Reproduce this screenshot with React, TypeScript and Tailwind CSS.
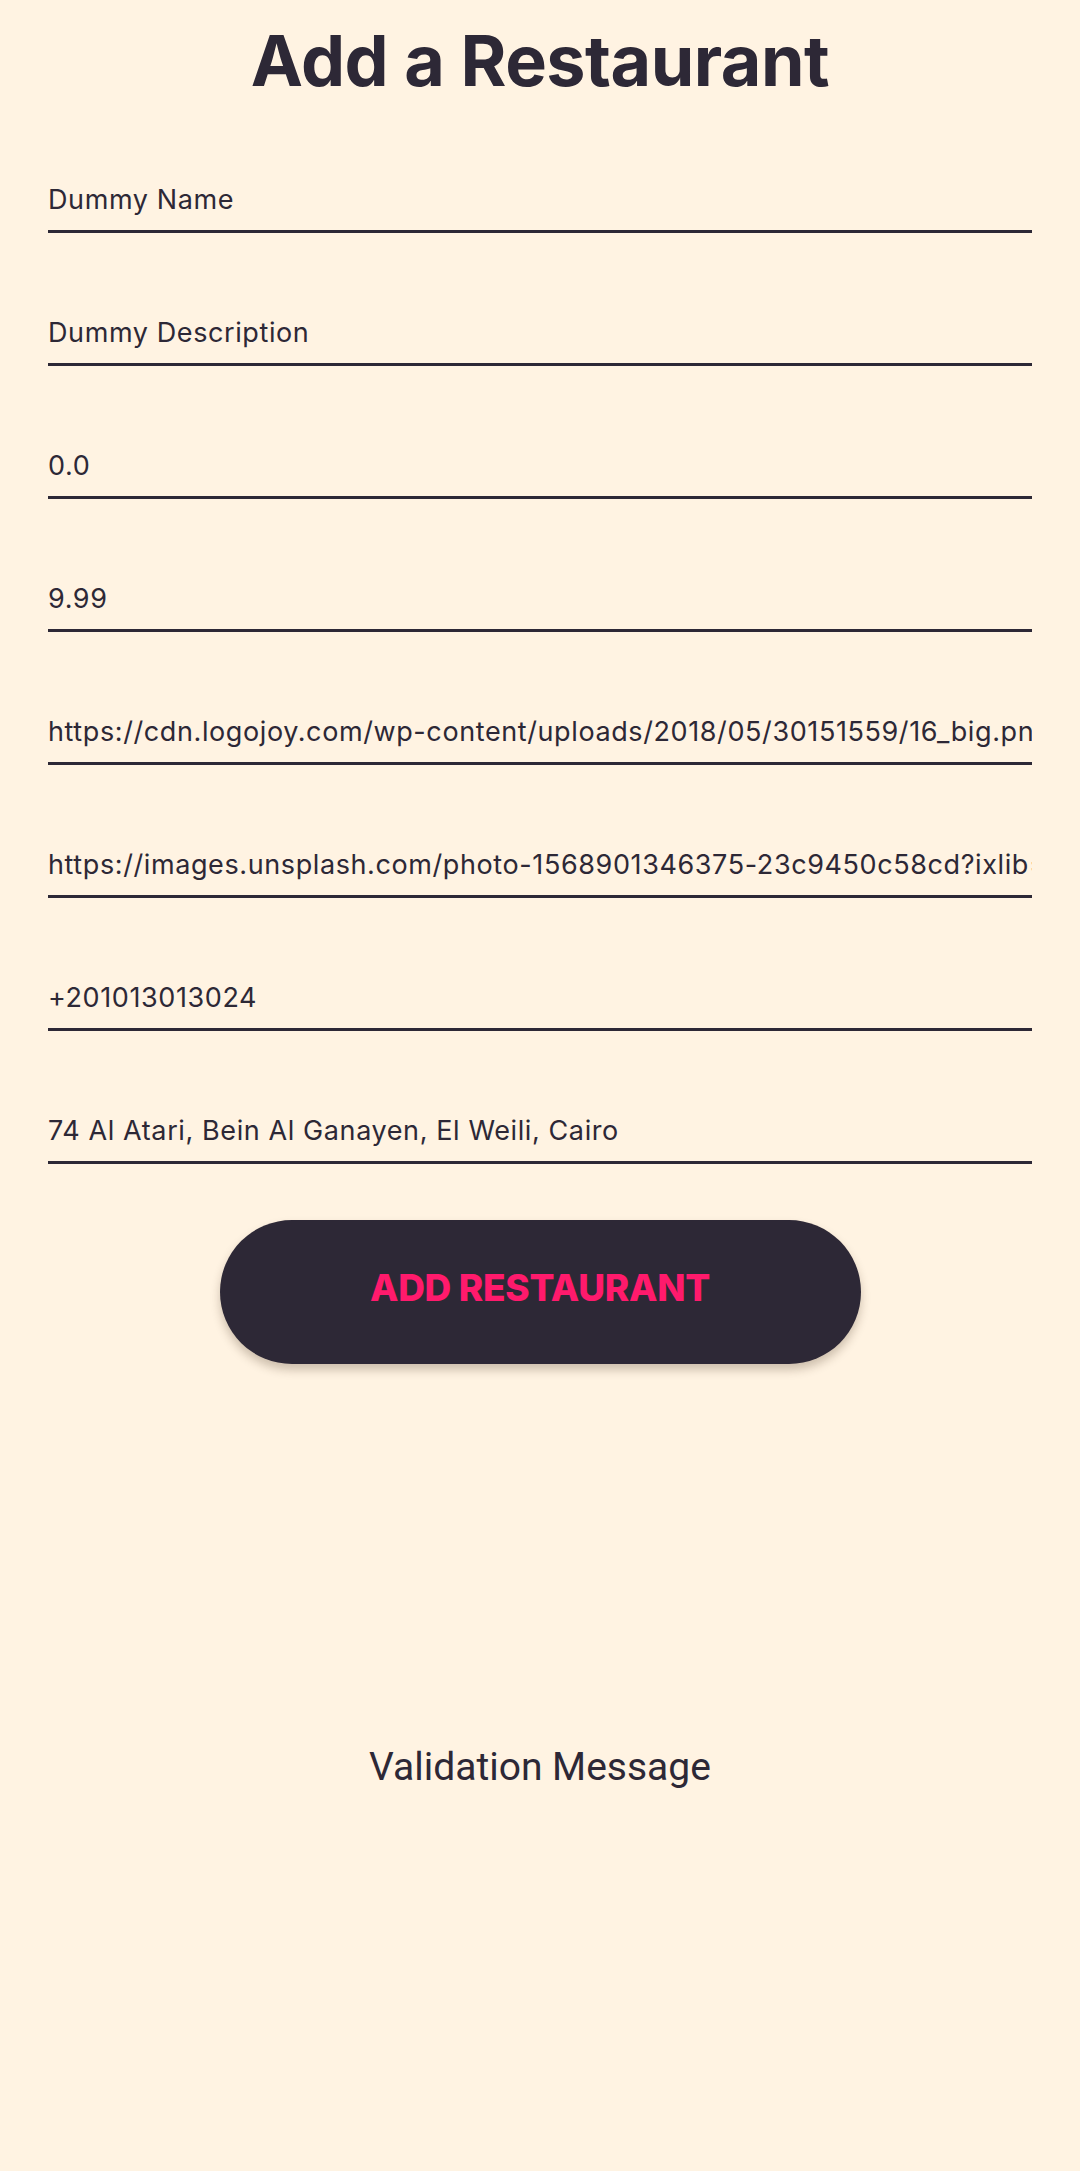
const fields = [
  'Dummy Name',
  'Dummy Description',
  '0.0',
  '9.99',
  'https://cdn.logojoy.com/wp-content/uploads/2018/05/30151559/16_big.png',
  'https://images.unsplash.com/photo-1568901346375-23c9450c58cd?ixlib=rb-1.2.1&auto=format&fit=crop&w=1000&q=80',
  '+201013013024',
  '74 Al Atari, Bein Al Ganayen, El Weili, Cairo',
];

export default function App() {
  return (
    <div className="min-h-[2171px] w-full bg-[#fff3e2] flex flex-col text-[#2d2836] font-['Inter',sans-serif]">
      <h1 className="text-center text-[70px] leading-[72px] font-bold tracking-[-0.5px] pt-[25px]">
        Add a Restaurant
      </h1>

      <form className="flex flex-col px-[48px]" onSubmit={e => e.preventDefault()}>
        {fields.map((value, i) => (
          <input
            key={i}
            readOnly
            defaultValue={value}
            className="mt-[75px] first:mt-[78px] h-[58px] w-full bg-transparent border-b-[3px] border-[#2d2836] text-[27px] tracking-[0.6px] text-[#2d2836] outline-none pb-[6px]"
          />
        ))}

        <button
          type="submit"
          className="self-center mt-[56px] w-[641px] h-[144px] rounded-full bg-[#2d2836] text-[#ff1a6c] text-[37px] font-extrabold tracking-[-0.3px] pb-[8px] shadow-[0_6px_10px_rgba(60,40,20,0.25)]"
        >
          ADD RESTAURANT
        </button>
      </form>

      <div className="flex-1 flex items-center justify-center">
        <p className="font-['Roboto',sans-serif] text-[39px] font-normal text-[#2d2836]">Validation Message</p>
      </div>
    </div>
  );
}
